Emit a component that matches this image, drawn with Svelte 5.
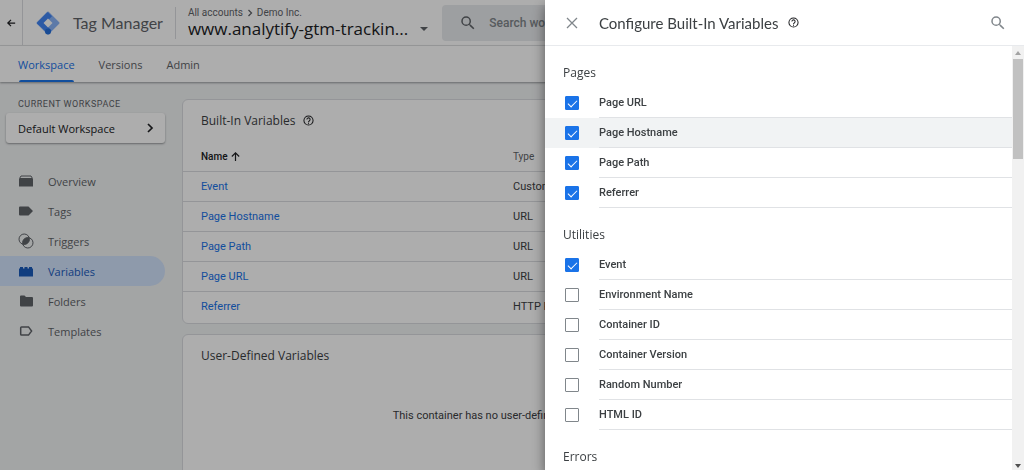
<script lang="ts">
	interface Option {
		name: string;
		checked: boolean;
	}

	interface Group {
		title: string;
		options: Option[];
	}

	const NAV = ['Overview', 'Tags', 'Triggers', 'Variables', 'Folders', 'Templates'] as const;
	const TABS = ['Workspace', 'Versions', 'Admin'] as const;

	const variables = [
		{ name: 'Event', type: 'Custom Event' },
		{ name: 'Page Hostname', type: 'URL' },
		{ name: 'Page Path', type: 'URL' },
		{ name: 'Page URL', type: 'URL' },
		{ name: 'Referrer', type: 'HTTP Referrer' }
	];

	let groups: Group[] = $state([
		{
			title: 'Pages',
			options: [
				{ name: 'Page URL', checked: true },
				{ name: 'Page Hostname', checked: true },
				{ name: 'Page Path', checked: true },
				{ name: 'Referrer', checked: true }
			]
		},
		{
			title: 'Utilities',
			options: [
				{ name: 'Event', checked: true },
				{ name: 'Environment Name', checked: false },
				{ name: 'Container ID', checked: false },
				{ name: 'Container Version', checked: false },
				{ name: 'Random Number', checked: false },
				{ name: 'HTML ID', checked: false }
			]
		},
		{ title: 'Errors', options: [] }
	]);

	let activeNav = $state('Variables');
	let activeTab = $state('Workspace');
	let activeOption = $state('Page Hostname');
</script>

{#snippet help()}
	<svg class="help" viewBox="0 0 24 24" aria-hidden="true">
		<circle cx="12" cy="12" r="10" fill="none" stroke="currentColor" stroke-width="2.2" />
		<path d="M8.5 9.8a3.5 3.5 0 1 1 5.6 2.8c-1.3 1-2.1 1.500-2.100 3" fill="none" stroke="currentColor" stroke-width="2.2" />
		<path d="M10.900 17h2.200v2.200h-2.200z" fill="currentColor" />
	</svg>
{/snippet}

{#snippet magnifier()}
	<svg class="magnifier" viewBox="0 0 24 24" aria-hidden="true">
		<path
			fill="currentColor"
			d="M15.500 14h-.79l-.28-.27A6.470 6.470 0 0 0 16 9.500 6.500 6.500 0 1 0 9.500 16c1.610 0 3.090-.59 4.230-1.570l.27.28v.79l5 4.990L20.490 19zm-6 0a4.500 4.500 0 1 1 0-9 4.500 4.500 0 0 1 0 9z"
		/>
	</svg>
{/snippet}

{#snippet navIcon(name: string)}
	<svg viewBox="0 0 16 16" aria-hidden="true">
		{#if name === 'Overview'}
			<path d="M3 3h10l1.500 2.500h-13z" fill="none" stroke="currentColor" />
			<path d="M1 6h14v7.500H1z" fill="currentColor" />
		{:else if name === 'Tags'}
			<path d="M1 4.500a1 1 0 0 1 1-1h8.500L15 8l-4.500 4.500H2a1 1 0 0 1-1-1z" fill="currentColor" />
		{:else if name === 'Triggers'}
			<circle cx="6.200" cy="6.200" r="5.200" fill="none" stroke="currentColor" />
			<circle cx="9.800" cy="9.800" r="5.200" fill="none" stroke="currentColor" />
			<path d="M4.700 11.200A5.200 5.200 0 0 1 11.200 4.700 5.200 5.200 0 0 1 4.700 11.200z" fill="currentColor" />
		{:else if name === 'Variables'}
			<path d="M1 5.500h1V4h3v1.500h1.500V4h3v1.500H11V4h3v1.500h1v8H1z" fill="currentColor" />
		{:else if name === 'Folders'}
			<path d="M2 3.500a1 1 0 0 1 1-1h3.500L8 4h6a1 1 0 0 1 1 1v7.500a1 1 0 0 1-1 1H3a1 1 0 0 1-1-1z" fill="currentColor" />
		{:else}
			<path d="M2.700 4.700a.8.8 0 0 1 .8-.8h7L13.600 8l-3.100 4.100h-7a.8.8 0 0 1-.8-.8z" fill="none" stroke="currentColor" stroke-width="1.500" />
		{/if}
	</svg>
{/snippet}

<div class="app">
	<header class="topbar">
		<button class="back" aria-label="Back">
			<svg viewBox="0 0 12 12" aria-hidden="true">
				<path d="M11 6H2.500M6 2.200 2.200 6 6 9.800" fill="none" stroke="currentColor" stroke-width="1.500" />
			</svg>
		</button>
		<a class="brand" href="#home">
			<svg viewBox="0 0 24 24" aria-hidden="true">
				<path d="M12 1.500 22.500 12 12 22.500 1.500 12z" fill="#8ab4f8" stroke="#8ab4f8" stroke-width="2" stroke-linejoin="round" />
				<path d="m12 1.200 4 4L5.600 16 1.300 12.700a1 1 0 0 1 0-1.400L11 1.600z" fill="#4285f4" />
				<path d="m5 9 10.500 10.500-3.500 3.500L1.200 12.500z" fill="#4285f4" />
				<path d="m12 7.500 4.500 4.500-4.500 4.500L7.500 12z" fill="#fff" />
				<circle cx="12" cy="20.400" r="3" fill="#246fdb" />
			</svg>
			<span>Tag Manager</span>
		</a>
		<div class="account">
			<div class="crumbs">
				<span>All accounts</span>
				<svg viewBox="0 0 8 8" aria-hidden="true">
					<path d="m2.500 1 3 3-3 3" fill="none" stroke="currentColor" stroke-width="1.300" />
				</svg>
				<span>Demo Inc.</span>
			</div>
			<button class="container-name">
				<span>www.analytify-gtm-trackin...</span>
				<svg viewBox="0 0 8 4" aria-hidden="true"><path d="M0 0h8L4 4z" fill="currentColor" /></svg>
			</button>
		</div>
		<label class="search">
			{@render magnifier()}
			<input type="text" placeholder="Search workspace" aria-label="Search workspace" />
		</label>
	</header>

	<nav class="tabs">
		{#each TABS as tab (tab)}
			<button class:active={activeTab === tab} onclick={() => (activeTab = tab)}>{tab}</button>
		{/each}
	</nav>

	<div class="body">
		<aside>
			<div class="caption">CURRENT WORKSPACE</div>
			<button class="workspace">
				<span>Default Workspace</span>
				<svg viewBox="0 0 12 12" aria-hidden="true">
					<path d="m4 2 4 4-4 4" fill="none" stroke="currentColor" stroke-width="1.700" />
				</svg>
			</button>
			<nav class="side">
				{#each NAV as item (item)}
					<button class:active={activeNav === item} onclick={() => (activeNav = item)}>
						{@render navIcon(item)}
						<span>{item}</span>
					</button>
				{/each}
			</nav>
		</aside>

		<main>
			<section class="card">
				<h2>Built-In Variables {@render help()}</h2>
				<table>
					<thead>
						<tr>
							<th class="name">
								Name
								<svg viewBox="0 0 12 12" aria-hidden="true">
									<path d="M6 11V2M2 6l4-4 4 4" fill="none" stroke="currentColor" stroke-width="1.300" />
								</svg>
							</th>
							<th>Type</th>
						</tr>
					</thead>
					<tbody>
						{#each variables as variable (variable.name)}
							<tr>
								<td><a href="#variable">{variable.name}</a></td>
								<td>{variable.type}</td>
							</tr>
						{/each}
					</tbody>
				</table>
			</section>
			<section class="card">
				<h2>User-Defined Variables</h2>
				<p>This container has no user-defined variables, click the "New" button to create one.</p>
			</section>
		</main>
	</div>
</div>

<div class="scrim"></div>

<div class="drawer" role="dialog" aria-labelledby="drawer-title">
	<header>
		<button class="close" aria-label="Close">
			<svg viewBox="0 0 12 12" aria-hidden="true">
				<path d="m1 1 10 10M11 1 1 11" fill="none" stroke="currentColor" stroke-width="1.300" />
			</svg>
		</button>
		<h1 id="drawer-title">Configure Built-In Variables</h1>
		{@render help()}
		<button class="find" aria-label="Search">{@render magnifier()}</button>
	</header>
	<div class="content">
		<div class="list">
			{#each groups as group (group.title)}
				<section class="group">
					<h3>{group.title}</h3>
					{#each group.options as option (option.name)}
						<label
							class="option"
							class:active={activeOption === option.name}
							onmouseenter={() => (activeOption = option.name)}
						>
							<input type="checkbox" bind:checked={option.checked} />
							<span>{option.name}</span>
						</label>
					{/each}
				</section>
			{/each}
		</div>
		<div class="scrollbar" aria-hidden="true">
			<svg viewBox="0 0 6 4"><path d="M0 4h6L3 0z" fill="#a3a3a3" /></svg>
			<div class="thumb"></div>
			<svg viewBox="0 0 6 4"><path d="M0 0h6L3 4z" fill="#505050" /></svg>
		</div>
	</div>
</div>

<style>
	:global(body) {
		margin: 0;
		font-family: Roboto, 'Liberation Sans', sans-serif;
		font-size: 11px;
		color: #3c4043;
	}

	button {
		padding: 0;
		border: 0;
		background: none;
		font: inherit;
		color: inherit;
		text-align: left;
		cursor: pointer;
	}

	svg {
		display: block;
		flex: none;
	}

	a {
		color: #1a73e8;
		text-decoration: none;
	}

	h1,
	h2,
	h3 {
		margin: 0;
		font-family: 'Open Sans', sans-serif;
		font-size: 12px;
		font-weight: 400;
	}

	.help {
		width: 11px;
		height: 11px;
		color: #202124;
	}

	.magnifier {
		width: 18px;
		height: 18px;
	}

	.app {
		display: flex;
		flex-direction: column;
		height: 100vh;
		overflow: hidden;
		background: #f1f3f4;
	}

	.topbar {
		display: flex;
		align-items: center;
		flex: none;
		height: 45px;
		background: #fff;
		border-bottom: 1px solid #e0e2e5;
	}

	.back {
		display: flex;
		align-items: center;
		justify-content: center;
		align-self: stretch;
		width: 23px;
		border-right: 1px solid #dadce0;
		color: #202124;
	}

	.back svg {
		width: 10px;
		height: 10px;
	}

	.brand {
		display: flex;
		align-items: center;
		gap: 13px;
		padding: 0 12px 0 13px;
		font-family: Lato, 'Open Sans', sans-serif;
		font-size: 16px;
		color: #5f6368;
		white-space: nowrap;
	}

	.brand svg {
		width: 24px;
		height: 24px;
	}

	.account {
		padding-left: 12px;
		border-left: 1px solid #dadce0;
		white-space: nowrap;
	}

	.crumbs {
		display: flex;
		align-items: center;
		gap: 3px;
		font-size: 10px;
		line-height: 12px;
		color: #5f6368;
	}

	.crumbs svg {
		width: 8px;
		height: 8px;
	}

	.container-name {
		display: flex;
		align-items: center;
		gap: 12px;
		font-family: 'Open Sans', sans-serif;
		font-size: 17px;
		line-height: 20px;
		color: #202124;
	}

	.container-name svg {
		width: 8px;
		height: 4px;
		color: #5f6368;
	}

	.search {
		display: flex;
		align-items: center;
		flex: 1;
		gap: 12px;
		height: 36px;
		margin: 0 16px 0 14px;
		padding-left: 17px;
		border-radius: 4px;
		background: #e8eaed;
		color: #5f6368;
	}

	.search input {
		flex: 1;
		min-width: 0;
		padding: 0;
		border: 0;
		outline: 0;
		background: none;
		font: 500 12px Roboto, sans-serif;
	}

	.search input::placeholder {
		color: #80868b;
	}

	.tabs {
		display: flex;
		flex: none;
		gap: 24px;
		height: 36px;
		padding: 0 18px;
		background: #fff;
		box-shadow: 0 1px 2px rgba(60, 64, 67, 0.5);
		z-index: 1;
	}

	.tabs button {
		position: relative;
		font-family: 'Open Sans', sans-serif;
		font-size: 11px;
		font-weight: 500;
		color: #5f6368;
	}

	.tabs .active {
		color: #1a73e8;
	}

	.tabs .active::after {
		content: '';
		position: absolute;
		inset: auto 1px 0;
		height: 2px;
		border-radius: 2px 2px 0 0;
		background: #1a73e8;
	}

	.body {
		display: flex;
		flex: 1;
		min-height: 0;
	}

	aside {
		flex: none;
		width: 165px;
		padding-top: 16px;
	}

	.caption {
		padding-left: 18px;
		font-size: 9px;
		line-height: 12px;
		letter-spacing: 0.5px;
		color: #5f6368;
	}

	.workspace {
		display: flex;
		align-items: center;
		justify-content: space-between;
		width: 159px;
		height: 30px;
		margin: 3px 0 23px 6px;
		padding: 0 9px 0 12px;
		border-radius: 3px;
		background: #fff;
		box-shadow: 0 1px 2px rgba(60, 64, 67, 0.5);
		font-family: 'Open Sans', sans-serif;
		font-size: 11px;
		font-weight: 500;
		color: #202124;
	}

	.workspace svg {
		width: 12px;
		height: 12px;
	}

	.side button {
		display: flex;
		align-items: center;
		gap: 14px;
		width: 100%;
		height: 30px;
		padding-left: 18px;
		border-radius: 0 15px 15px 0;
		font-family: 'Open Sans', sans-serif;
		font-size: 11px;
		font-weight: 500;
		color: #5f6368;
	}

	.side svg {
		width: 16px;
		height: 16px;
	}

	.side .active {
		background: #d2e3fc;
		color: #185abc;
	}

	main {
		flex: 1;
		min-width: 0;
		padding: 17px 24px 0 17px;
	}

	.card {
		margin-bottom: 10px;
		padding-bottom: 2px;
		border: 1px solid #dadce0;
		border-radius: 6px;
		background: #fff;
	}

	.card h2 {
		display: flex;
		align-items: center;
		gap: 8px;
		height: 40px;
		padding-left: 18px;
	}

	table {
		width: 100%;
		border-collapse: collapse;
		table-layout: fixed;
	}

	th,
	td {
		height: 29px;
		padding: 0 0 0 18px;
		text-align: left;
	}

	th {
		padding-top: 2px;
		font-size: 10px;
		font-weight: 400;
		color: #5f6368;
	}

	.name {
		width: 294px;
		font-weight: 500;
		color: #202124;
	}

	.name svg {
		display: inline-block;
		width: 11px;
		height: 11px;
		vertical-align: middle;
	}

	tbody tr {
		border-top: 1px solid #dadce0;
	}

	.card p {
		margin: 0;
		padding: 33px 18px 80px;
		line-height: 16px;
		text-align: center;
	}

	.scrim {
		position: fixed;
		inset: 0;
		z-index: 2;
		background: rgba(0, 0, 0, 0.32);
	}

	.drawer {
		position: fixed;
		inset: 0 0 0 auto;
		z-index: 3;
		display: flex;
		flex-direction: column;
		width: min(479px, 100%);
		background: #fff;
		box-shadow: 0 6px 12px rgba(0, 0, 0, 0.5);
	}

	.drawer header {
		display: flex;
		align-items: center;
		flex: none;
		height: 45px;
		padding: 0 17px 0 21px;
		border-bottom: 1px solid #e8eaed;
	}

	.close {
		margin-right: 21px;
		color: #80868b;
	}

	.close svg {
		width: 12px;
		height: 12px;
	}

	.drawer h1 {
		margin-right: 10px;
		font-family: Lato, 'Open Sans', sans-serif;
		font-size: 15px;
	}

	.find {
		margin-left: auto;
		color: #80868b;
	}

	.content {
		display: flex;
		flex: 1;
		min-height: 0;
	}

	.list {
		flex: 1;
		padding-top: 12px;
		overflow: hidden;
	}

	.group {
		margin-bottom: 12px;
	}

	.group h3 {
		padding-left: 18px;
		line-height: 30px;
	}

	.option {
		display: flex;
		align-items: center;
		gap: 20px;
		height: 30px;
		padding-left: 20px;
	}

	.option.active {
		background: #f1f3f4;
	}

	.option span {
		flex: 1;
		border-bottom: 1px solid #e0e2e5;
		font-size: 11px;
		font-weight: 500;
		line-height: 29px;
	}

	.option input {
		display: flex;
		align-items: center;
		justify-content: center;
		appearance: none;
		width: 14px;
		height: 14px;
		margin: 0;
		border: 1px solid #80868b;
		border-radius: 1px;
	}

	.option input:checked {
		border-color: #1a73e8;
		background: #1a73e8;
	}

	.option input:checked::after {
		content: '';
		width: 4px;
		height: 8px;
		margin-bottom: 2px;
		border: solid #fff;
		border-width: 0 1px 1px 0;
		transform: rotate(45deg);
	}

	.scrollbar {
		display: flex;
		flex-direction: column;
		align-items: center;
		width: 12px;
		padding: 5px 0 2px;
		background: #f1f1f1;
	}

	.scrollbar svg {
		width: 6px;
		height: 4px;
	}

	.thumb {
		width: 10px;
		height: 24%;
		margin: 4px 0 auto;
		background: #c1c1c1;
	}
</style>
